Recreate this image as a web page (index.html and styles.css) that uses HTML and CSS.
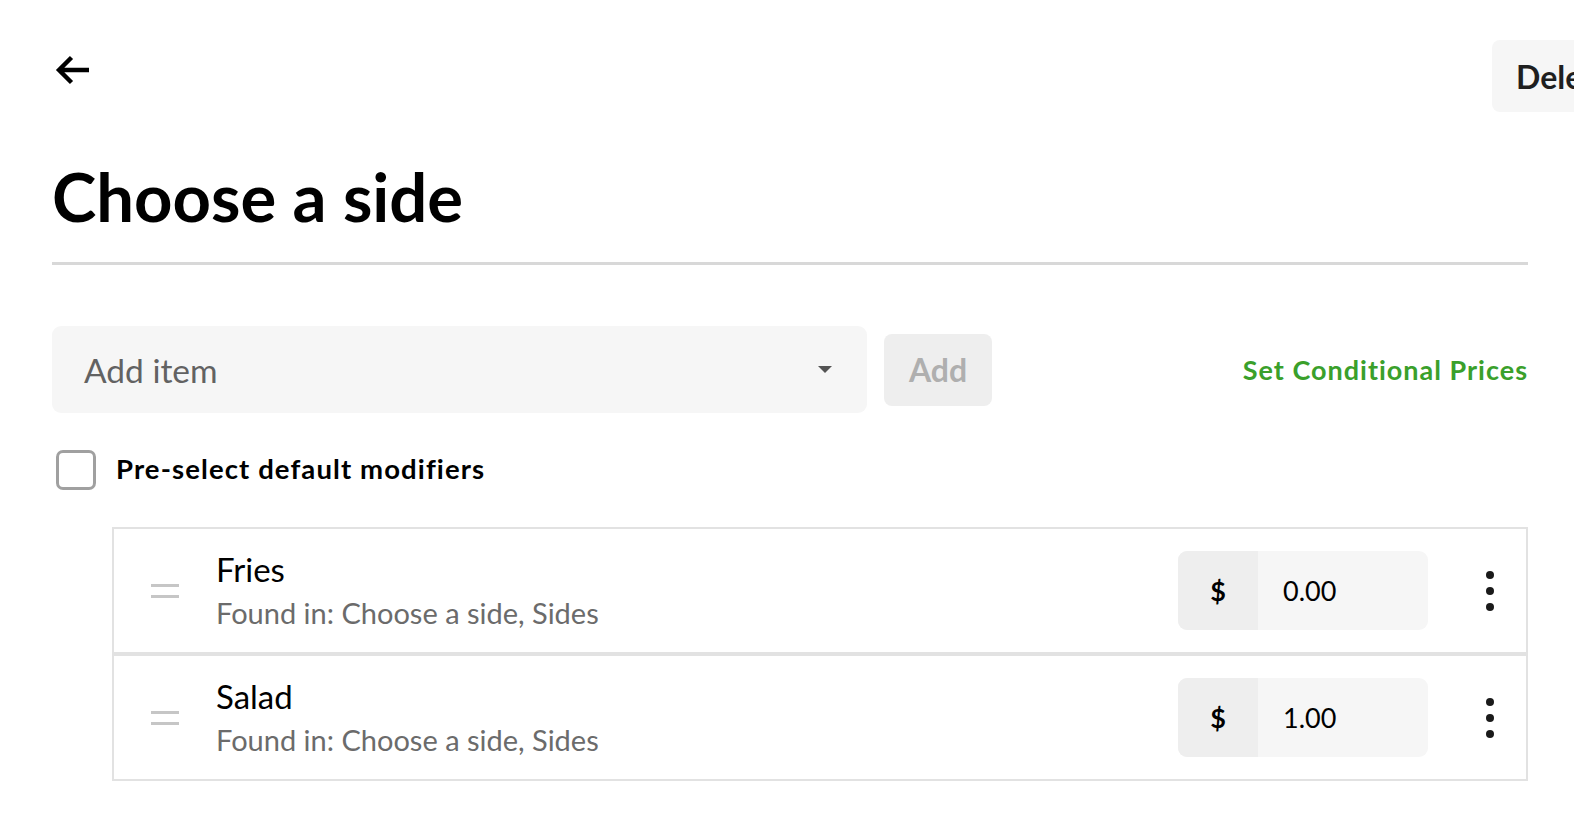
FILE: index.html
```html
<!DOCTYPE html>
<html lang="en">
<head>
<meta charset="utf-8">
<title>Choose a side</title>
<link rel="stylesheet" href="styles.css">
</head>
<body>
<div class="page">
  <header class="topbar">
    <button class="back" aria-label="Back">
      <svg width="34" height="30" viewBox="0 0 34 30"><path d="M34 15H4 M16.5 2.5L4 15l12.5 12.5" fill="none" stroke="#000" stroke-width="4.4"/></svg>
    </button>
    <div class="spacer"></div>
    <button class="delete">Delete</button>
  </header>

  <h1 class="title">Choose a side</h1>
  <div class="divider"></div>

  <div class="add-row">
    <div class="select">
      <span class="placeholder">Add item</span>
      <span class="caret"></span>
    </div>
    <button class="add-btn">Add</button>
    <div class="spacer"></div>
    <a class="cond">Set Conditional Prices</a>
  </div>

  <label class="check">
    <span class="box"></span>
    <span class="check-label">Pre-select default modifiers</span>
  </label>

  <ul class="items">
    <li class="item">
      <span class="handle"><i></i><i></i></span>
      <div class="info">
        <div class="name">Fries</div>
        <div class="found">Found in: Choose a side, Sides</div>
      </div>
      <div class="price">
        <span class="cur">$</span>
        <span class="amount">0.00</span>
      </div>
      <span class="kebab"><svg width="8" height="40" viewBox="0 0 8 40"><circle cx="4" cy="4" r="4"/><circle cx="4" cy="20" r="4"/><circle cx="4" cy="36" r="4"/></svg></span>
    </li>
    <li class="item">
      <span class="handle"><i></i><i></i></span>
      <div class="info">
        <div class="name">Salad</div>
        <div class="found">Found in: Choose a side, Sides</div>
      </div>
      <div class="price">
        <span class="cur">$</span>
        <span class="amount">1.00</span>
      </div>
      <span class="kebab"><svg width="8" height="40" viewBox="0 0 8 40"><circle cx="4" cy="4" r="4"/><circle cx="4" cy="20" r="4"/><circle cx="4" cy="36" r="4"/></svg></span>
    </li>
  </ul>
</div>
</body>
</html>
```

FILE: styles.css
```css
html, body {
  margin: 0;
  padding: 0;
  background: #fff;
  overflow: hidden;
}
body {
  font-family: "Lato", "Liberation Sans", sans-serif;
  color: #000;
}
button {
  font-family: inherit;
  border: 0;
  padding: 0;
  background: none;
  cursor: pointer;
}
.page {
  padding: 40px 46px 0 52px;
}
.spacer {
  flex: 1;
}

/* top bar */
.topbar {
  display: flex;
  align-items: flex-start;
  height: 72px;
}
.back {
  margin: 15px 0 0 3px;
  width: 34px;
  height: 30px;
  display: block;
}
.back svg {
  display: block;
}
.delete {
  flex-shrink: 0;
  width: 160px;
  height: 72px;
  margin-right: -124px;
  background: #f6f6f6;
  border-radius: 8px;
  text-align: left;
  padding-left: 24px;
  font-size: 32px;
  font-weight: 700;
  color: #1f1f1f;
}

/* title */
.title {
  margin: 44px 0 0;
  font-size: 67px;
  line-height: 80px;
  font-weight: 700;
}
.divider {
  margin-top: 26px;
  height: 3px;
  background: #d8d8d8;
}

/* add row */
.add-row {
  display: flex;
  align-items: center;
  margin-top: 61px;
}
.select {
  width: 815px;
  height: 87px;
  background: #f6f6f6;
  border-radius: 9px;
  display: flex;
  align-items: center;
  padding: 0 35px 0 32px;
  box-sizing: border-box;
}
.placeholder {
  flex: 1;
  font-size: 33.5px;
  color: #626262;
}
.caret {
  width: 0;
  height: 0;
  border-left: 7.5px solid transparent;
  border-right: 7.5px solid transparent;
  border-top: 7px solid #545454;
}
.add-btn {
  margin-left: 17px;
  width: 108px;
  height: 72px;
  background: #eeeeee;
  border-radius: 8px;
  font-size: 32px;
  font-weight: 700;
  color: #afafaf;
}
.cond {
  font-size: 27px;
  font-weight: 700;
  letter-spacing: 1px;
  color: #3aa02b;
}

/* checkbox */
.check {
  display: flex;
  align-items: center;
  margin-top: 37px;
  margin-left: 4px;
}
.box {
  width: 40px;
  height: 40px;
  box-sizing: border-box;
  border: 3px solid #a0a0a0;
  border-radius: 7px;
}
.check-label {
  margin-left: 20px;
  margin-bottom: 4px;
  font-size: 27.5px;
  font-weight: 700;
  letter-spacing: 1.1px;
  color: #000;
}

/* list */
.items {
  list-style: none;
  margin: 37px 0 0 60px;
  padding: 0;
}
.item {
  height: 127px;
  box-sizing: border-box;
  border: 2px solid #e2e2e2;
  display: flex;
  align-items: center;
}
.handle {
  margin-left: 37px;
  width: 28px;
  display: flex;
  flex-direction: column;
  gap: 8px;
}
.handle i {
  display: block;
  height: 3px;
  background: #c6c6c6;
}
.info {
  flex: 1;
  margin-left: 37px;
  font-size: 29px;
  line-height: 44px;
}
.name {
  color: #000;
  font-size: 33px;
}
.found {
  color: #6b6b6b;
}
.price {
  display: flex;
  width: 250px;
  height: 79px;
  border-radius: 9px;
  overflow: hidden;
  background: #f6f6f6;
  font-size: 27px;
}
.cur {
  width: 80px;
  background: #eeeeee;
  display: flex;
  align-items: center;
  justify-content: center;
  font-weight: 700;
}
.amount {
  display: flex;
  align-items: center;
  padding-left: 25px;
  color: #000;
}
.kebab {
  width: 48px;
  margin-left: 38px;
  margin-right: 12px;
  display: flex;
  justify-content: center;
  fill: #1a1a1a;
}
.kebab svg {
  display: block;
}
```
